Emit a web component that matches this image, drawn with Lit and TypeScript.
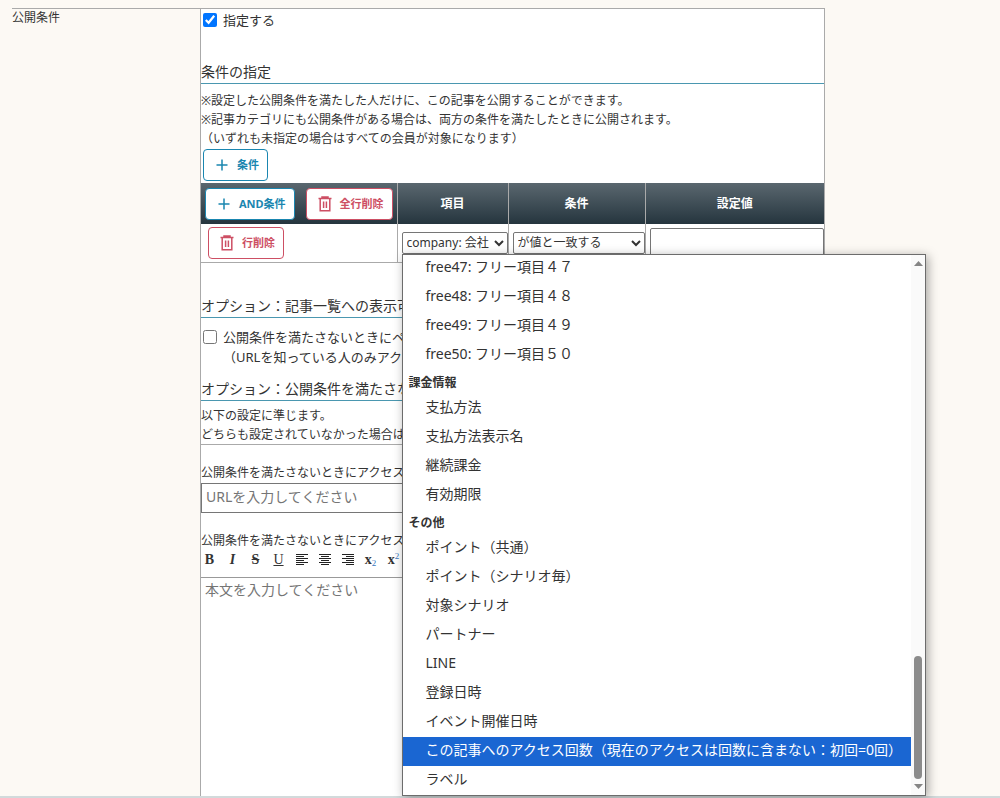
import { LitElement, html, css, svg } from "lit";
import { customElement, state } from "lit/decorators.js";
import { classMap } from "lit/directives/class-map.js";

interface OptionGroup {
  label?: string;
  items: string[];
}

const GROUPS: OptionGroup[] = [
  {
    items: [
      "free47: フリー項目４７",
      "free48: フリー項目４８",
      "free49: フリー項目４９",
      "free50: フリー項目５０",
    ],
  },
  { label: "課金情報", items: ["支払方法", "支払方法表示名", "継続課金", "有効期限"] },
  {
    label: "その他",
    items: [
      "ポイント（共通）",
      "ポイント（シナリオ毎）",
      "対象シナリオ",
      "パートナー",
      "LINE",
      "登録日時",
      "イベント開催日時",
      "この記事へのアクセス回数（現在のアクセスは回数に含まない：初回=0回）",
      "ラベル",
    ],
  },
];

const plus = html`<svg class="icon" viewBox="0 0 16 16" aria-hidden="true">
  <path d="M8 2.5v11M2.5 8h11" fill="none" stroke="currentColor" stroke-width="1.5" />
</svg>`;

const trash = html`<svg class="icon" viewBox="0 0 16 16" aria-hidden="true">
  <path
    d="M1.5 2.5h13M5 2.5v-1.5h6v1.5M3.2 2.5v12.2h9.6V2.5M6.6 5.5v6.5M9.4 5.5v6.5"
    fill="none"
    stroke="currentColor"
    stroke-width="1.5"
  />
</svg>`;

const alignIcon = (short: number) => html`<svg class="tool-icon" viewBox="0 0 14 14" aria-hidden="true">
  ${[1, 3, 5, 7, 9, 11].map((y, i) => {
    const w = i % 2 ? 8 : 12;
    const x = 1 + ((12 - w) * short) / 2;
    return svg`<rect x=${x} y=${y} width=${w} height="1" fill="#222" />`;
  })}
</svg>`;

@customElement("app-root")
export class AppRoot extends LitElement {
  @state() private active = GROUPS[2].items[7];

  static styles = css`
    :host {
      display: block;
      font-family: "Noto Sans", "Noto Sans CJK JP", sans-serif;
      font-size: 12px;
      line-height: 19px;
      color: #333;
    }
    * {
      box-sizing: border-box;
    }
    button,
    input,
    select,
    textarea {
      font-family: inherit;
      margin: 0;
    }
    .page {
      height: 100vh;
      display: flex;
      flex-direction: column;
      background: #fcf9f4;
      overflow: hidden;
    }
    .row {
      flex: 1;
      min-height: 0;
      display: grid;
      grid-template-columns: 188px minmax(0, 1fr);
      margin: 8px 175px 0 12px;
      border-top: 1px solid #aaa;
    }
    .name {
      line-height: 17px;
    }
    .edge {
      height: 2px;
      background: #d2dadb;
      flex: none;
    }
    .content {
      display: flex;
      flex-direction: column;
      background: #fff;
      border: solid #aaa;
      border-width: 0 1px;
      min-height: 0;
    }
    .check {
      display: flex;
      align-items: flex-start;
      gap: 6px;
      padding: 1px 0 2px 2px;
      font-size: 13px;
      line-height: 20px;
    }
    .check input {
      width: 14px;
      height: 14px;
      margin-top: 3px;
      flex: none;
    }
    .option-check {
      padding: 9px 0 0 2px;
    }
    h3 {
      margin: 0;
      font-size: 14px;
      font-weight: 400;
      line-height: 22px;
      border-bottom: 1px solid #4a97b0;
    }
    .section {
      padding-top: 29px;
    }
    .section.far {
      padding-top: 32px;
    }
    .section.near {
      padding-top: 11px;
    }
    .notes {
      margin: 0;
      padding-top: 7px;
    }
    .rule {
      padding-top: 5px;
      border-bottom: 1px solid #aaa;
    }
    .btn {
      display: inline-flex;
      align-items: center;
      gap: 7px;
      height: 32px;
      padding: 0 8px 0 10px;
      border: 1px solid currentColor;
      border-radius: 4px;
      background: #fff;
      font-size: 11px;
      font-weight: 700;
      line-height: 16px;
      white-space: nowrap;
    }
    .blue {
      color: #1a86b0;
    }
    .red {
      color: #cd4f64;
    }
    .icon {
      width: 16px;
      height: 16px;
      flex: none;
    }
    .add {
      padding: 1px 2px 2px;
      display: flex;
    }
    table {
      width: 100%;
      border-collapse: collapse;
      table-layout: fixed;
    }
    .c-tools {
      width: 196px;
    }
    .c-item {
      width: 111px;
    }
    .c-cond {
      width: 137px;
    }
    thead tr {
      background: linear-gradient(#5a676f, #25353e);
    }
    th {
      height: 41px;
      padding: 0 4px;
      color: #fff;
      font-size: 12px;
      font-weight: 700;
    }
    th + th,
    td + td {
      border-left: 1px solid #aaa;
    }
    td {
      height: 38px;
      padding: 0 0 0 4px;
      border-bottom: 1px solid #aaa;
    }
    td.tools {
      padding-left: 7px;
    }
    .buttons {
      display: flex;
      justify-content: space-between;
    }
    .anchor {
      position: relative;
      display: flex;
    }
    select {
      width: 100%;
      height: 22px;
      padding: 0;
      font-size: 12px;
      color: #333;
      background: #fff;
      border: 1px solid #767676;
      border-radius: 2px;
    }
    .value {
      display: block;
      width: 100%;
      height: 30px;
      border: 1px solid #767676;
      border-radius: 2px;
    }
    .popup {
      position: absolute;
      z-index: 2;
      top: 100%;
      left: 0;
      width: max-content;
      height: 542px;
      display: flex;
      background: #fff;
      border: 1px solid #6c6c6c;
      box-shadow: 2px 2px 10px rgba(0, 0, 0, 0.35);
      overflow: hidden;
    }
    .list {
      display: flex;
      flex-direction: column;
      justify-content: flex-end;
      overflow: hidden;
    }
    .opt {
      flex: none;
      padding: 0 9px 3px 23px;
      font-size: 14px;
      line-height: 26px;
      white-space: nowrap;
    }
    .opt.active {
      background: #1a66d2;
      color: #fff;
    }
    .group {
      flex: none;
      padding: 1px 0 0 6px;
      font-weight: 700;
      line-height: 23px;
    }
    .bar {
      width: 14px;
      display: flex;
      flex-direction: column;
      align-items: center;
      justify-content: space-between;
      padding: 6px 0;
      background: #fafafa;
    }
    .track {
      flex: 1;
      display: flex;
      flex-direction: column;
      justify-content: flex-end;
      padding: 5px 0;
    }
    .thumb {
      width: 8px;
      height: 123px;
      border-radius: 4px;
      background: #8b8b8b;
    }
    .arrow {
      width: 9px;
      height: 5px;
      fill: #858585;
    }
    .field {
      display: block;
      margin-top: 18px;
    }
    .url {
      width: 100%;
      height: 30px;
      margin-top: 1px;
      flex: none;
      padding: 0 4px 2px;
      font-size: 14px;
      border: 1px solid #767676;
    }
    .toolbar {
      display: flex;
      height: 20px;
      flex: none;
    }
    .tool {
      width: 23px;
      height: 20px;
      margin-left: -3px;
      margin-right: 3px;
      padding: 0;
      display: flex;
      align-items: center;
      justify-content: center;
      border: 0;
      background: none;
      font: 700 14px/20px "Liberation Serif", serif;
      color: #333;
    }
    .tool.italic {
      font-style: italic;
    }
    .tool.strike {
      text-decoration: line-through;
    }
    .tool.under {
      font-weight: 400;
      text-decoration: underline;
    }
    .tool small {
      font: 400 9px/9px "Liberation Serif", serif;
      color: #3878c0;
      align-self: flex-end;
      padding-bottom: 2px;
    }
    .tool small.up {
      align-self: flex-start;
      padding-top: 2px;
    }
    .tool-icon {
      width: 14px;
      height: 14px;
    }
    .body {
      flex: 1;
      width: 100%;
      min-height: 0;
      margin-top: 7px;
      padding: 2px 4px;
      border: 1px solid #999;
      border-width: 1px 0 0;
      font-size: 14px;
      line-height: 20px;
      resize: none;
    }
    ::placeholder {
      color: #757575;
    }
  `;

  private renderPopup() {
    return html`<div class="popup">
      <div class="list" role="listbox" aria-label="項目">
        ${GROUPS.map(
          (g) => html`${g.label ? html`<div class="group" role="presentation">${g.label}</div>` : ""}
          ${g.items.map(
            (item) => html`<div
              class=${classMap({ opt: true, active: item === this.active })}
              role="option"
              aria-selected=${item === this.active}
              @mouseenter=${() => (this.active = item)}
            >${item}</div>`
          )}`
        )}
      </div>
      <div class="bar" aria-hidden="true">
        <svg class="arrow" viewBox="0 0 9 5"><path d="M0 5L4.5 0L9 5z" /></svg>
        <div class="track"><div class="thumb"></div></div>
        <svg class="arrow" viewBox="0 0 9 5"><path d="M0 0L4.5 5L9 0z" /></svg>
      </div>
    </div>`;
  }

  render() {
    return html`<div class="page">
      <main class="row">
        <div class="name">公開条件</div>
        <div class="content">
          <label class="check"><input type="checkbox" checked />指定する</label>

          <section class="section">
            <h3>条件の指定</h3>
            <p class="notes">
              ※設定した公開条件を満たした人だけに、この記事を公開することができます。<br />
              ※記事カテゴリにも公開条件がある場合は、両方の条件を満たしたときに公開されます。<br />
              （いずれも未指定の場合はすべての会員が対象になります）
            </p>
            <div class="add"><button type="button" class="btn blue">${plus}条件</button></div>
            <table>
              <colgroup>
                <col class="c-tools" />
                <col class="c-item" />
                <col class="c-cond" />
                <col />
              </colgroup>
              <thead>
                <tr>
                  <th>
                    <div class="buttons">
                      <button type="button" class="btn blue">${plus}AND条件</button>
                      <button type="button" class="btn red">${trash}全行削除</button>
                    </div>
                  </th>
                  <th>項目</th>
                  <th>条件</th>
                  <th>設定値</th>
                </tr>
              </thead>
              <tbody>
                <tr>
                  <td class="tools">
                    <div class="buttons">
                      <button type="button" class="btn red">${trash}行削除</button>
                    </div>
                  </td>
                  <td>
                    <div class="anchor">
                      <select aria-label="項目"><option>company: 会社</option></select>
                      ${this.renderPopup()}
                    </div>
                  </td>
                  <td>
                    <div class="anchor">
                      <select aria-label="条件"><option>が値と一致する</option></select>
                    </div>
                  </td>
                  <td><input class="value" type="text" aria-label="設定値" /></td>
                </tr>
              </tbody>
            </table>
          </section>

          <section class="section far">
            <h3>オプション：記事一覧への表示可</h3>
            <label class="check option-check">
              <input type="checkbox" />
              <span>公開条件を満たさないときにペ<br />（URLを知っている人のみアク</span>
            </label>
          </section>

          <section class="section near">
            <h3>オプション：公開条件を満たさな</h3>
            <p class="notes rule">以下の設定に準じます。<br />どちらも設定されていなかった場合は</p>
          </section>

          <label class="field" for="url">公開条件を満たさないときにアクセス</label>
          <input class="url" id="url" type="text" placeholder="URLを入力してください" />

          <label class="field" for="body">公開条件を満たさないときにアクセス</label>
          <div class="toolbar" role="toolbar" aria-label="書式">
            <button type="button" class="tool">B</button>
            <button type="button" class="tool italic">I</button>
            <button type="button" class="tool strike">S</button>
            <button type="button" class="tool under">U</button>
            <button type="button" class="tool" aria-label="左揃え">${alignIcon(0)}</button>
            <button type="button" class="tool" aria-label="中央揃え">${alignIcon(1)}</button>
            <button type="button" class="tool" aria-label="右揃え">${alignIcon(2)}</button>
            <button type="button" class="tool">x<small>2</small></button>
            <button type="button" class="tool">x<small class="up">2</small></button>
          </div>
          <textarea class="body" id="body" placeholder="本文を入力してください"></textarea>
        </div>
      </main>
      <div class="edge"></div>
    </div>`;
  }
}
